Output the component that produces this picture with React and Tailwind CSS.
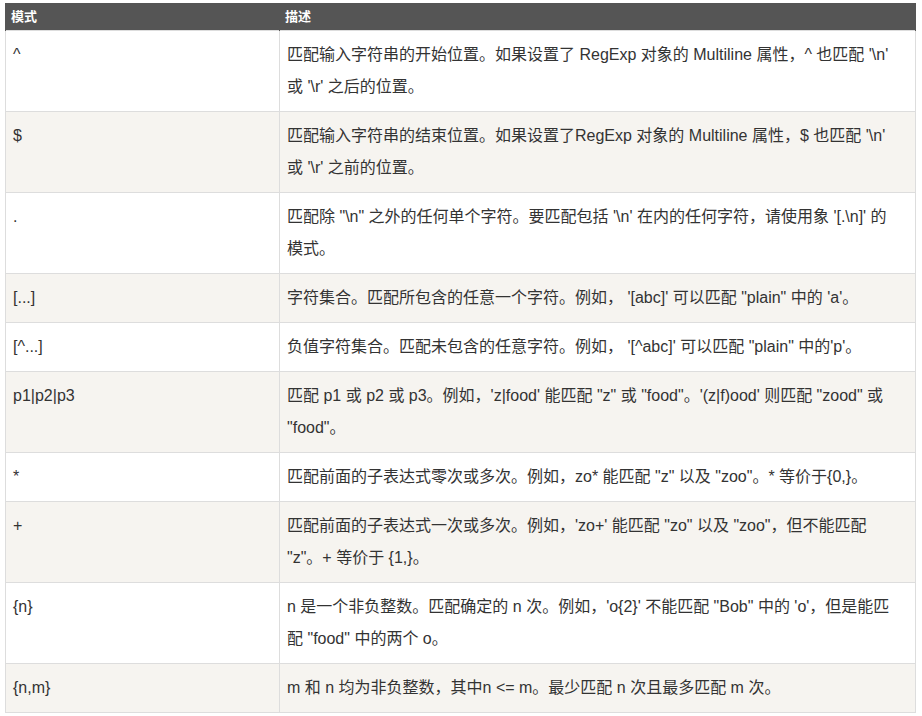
import React from "react";

const rows = [
  ["^", ["匹配输入字符串的开始位置。如果设置了 RegExp 对象的 Multiline 属性，^ 也匹配 '\\n'", "或 '\\r' 之后的位置。"]],
  ["$", ["匹配输入字符串的结束位置。如果设置了RegExp 对象的 Multiline 属性，$ 也匹配 '\\n'", "或 '\\r' 之前的位置。"]],
  [".", ["匹配除 \"\\n\" 之外的任何单个字符。要匹配包括 '\\n' 在内的任何字符，请使用象 '[.\\n]' 的", "模式。"]],
  ["[...]", ["字符集合。匹配所包含的任意一个字符。例如， '[abc]' 可以匹配 \"plain\" 中的 'a'。"]],
  ["[^...]", ["负值字符集合。匹配未包含的任意字符。例如， '[^abc]' 可以匹配 \"plain\" 中的'p'。"]],
  ["p1|p2|p3", ["匹配 p1 或 p2 或 p3。例如，'z|food' 能匹配 \"z\" 或 \"food\"。'(z|f)ood' 则匹配 \"zood\" 或", "\"food\"。"]],
  ["*", ["匹配前面的子表达式零次或多次。例如，zo* 能匹配 \"z\" 以及 \"zoo\"。* 等价于{0,}。"]],
  ["+", ["匹配前面的子表达式一次或多次。例如，'zo+' 能匹配 \"zo\" 以及 \"zoo\"，但不能匹配", "\"z\"。+ 等价于 {1,}。"]],
  ["{n}", ["n 是一个非负整数。匹配确定的 n 次。例如，'o{2}' 不能匹配 \"Bob\" 中的 'o'，但是能匹", "配 \"food\" 中的两个 o。"]],
  ["{n,m}", ["m 和 n 均为非负整数，其中n <= m。最少匹配 n 次且最多匹配 m 次。"]],
];

export default function App() {
  return (
    <div
      className="bg-white w-[922px] h-[716px] pt-[3px] pl-[5px] text-[#333] text-[16px]"
      style={{ fontFamily: '"Liberation Sans", "Noto Sans CJK SC", sans-serif' }}
    >
      <table className="w-[911px] border-collapse table-fixed">
        <colgroup>
          <col className="w-[274px]" />
          <col />
        </colgroup>
        <thead>
          <tr className="bg-[#555555] text-white text-[13px] font-bold">
            <th className="h-[27px] px-[5px] text-left font-bold border-x border-[#555555]">模式</th>
            <th className="h-[27px] px-[5px] text-left font-bold border-x border-[#555555]">描述</th>
          </tr>
        </thead>
        <tbody>
          {rows.map(([pat, lines], i) => (
            <tr key={i} className={i % 2 === 1 ? "bg-[#f6f4f0]" : "bg-white"}>
              <td className="align-top border border-[#dddddd] px-[7px] py-[8px] leading-[32px]">{pat}</td>
              <td className="align-top border border-[#dddddd] px-[7px] py-[8px] leading-[32px] whitespace-nowrap">
                {lines.map((l, j) => (
                  <div key={j}>{l}</div>
                ))}
              </td>
            </tr>
          ))}
        </tbody>
      </table>
    </div>
  );
}
